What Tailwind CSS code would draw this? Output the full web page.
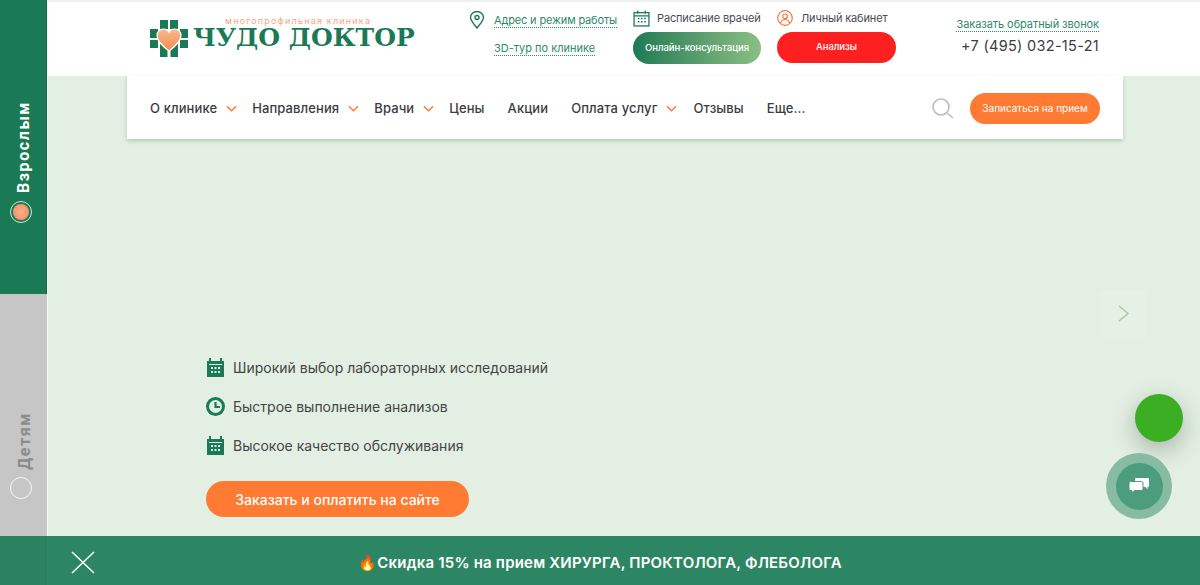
<!DOCTYPE html>
<html lang="ru">
<head>
    <meta charset="UTF-8">
    <title>Чудо Доктор</title>
    <script src="https://cdn.jsdelivr.net/npm/@tailwindcss/browser@4"></script>
</head>
<body class="bg-[#e2efe2] font-['Inter','Roboto',sans-serif] text-[#3c3c3c] overflow-hidden">
<div class="relative w-[1200px] h-[585px] overflow-hidden flex">
    <!-- Side tabs -->
    <aside class="w-[48px] shrink-0 flex flex-col border-r border-white/70">
        <div class="h-[294px] bg-[#1a7a55] border-r border-[#10693f] flex flex-col items-center justify-end pb-[71px]">
            <span class="[writing-mode:vertical-rl] rotate-180 ml-[2px] font-['Roboto',sans-serif] text-[16px] leading-none font-bold tracking-[1.6px] text-white">Взрослым</span>
            <span class="mt-[8px] -ml-[5px] w-[22px] h-[22px] rounded-full border border-white/80 flex items-center justify-center">
                <span class="w-[16px] h-[16px] rounded-full bg-radial from-[#fbae8c] to-[#f8895a]"></span>
            </span>
        </div>
        <div class="flex-1 bg-[#c6c6c6] flex flex-col items-center justify-end pb-[86px]">
            <span class="[writing-mode:vertical-rl] rotate-180 ml-[2px] font-['Roboto',sans-serif] text-[16px] leading-none font-bold tracking-[1.6px] text-[#8b8b8b]">Детям</span>
            <span class="mt-[7px] -ml-[5px] w-[22px] h-[22px] rounded-full border border-white/80"></span>
        </div>
    </aside>

    <main class="flex-1 relative">
        <!-- Header -->
        <header class="h-[76px] bg-white border-t-2 border-[#eef1ef] flex items-start">
            <div class="ml-[102px] mt-[18px] flex items-start w-[264px] shrink-0">
                <svg width="38" height="37" viewBox="0 0 38 37" class="shrink-0">
                    <defs><linearGradient id="heart" x1="0" y1="0" x2="0" y2="1"><stop offset="0" stop-color="#fbb98f"/><stop offset="1" stop-color="#f28a4e"/></linearGradient></defs>
                    <path fill="#1a7a55" d="M10 0h8v9h-8zM20 0h8v9h-8zM0 9h8v9H0zM0 20h8v8H0zM30 9h8v9h-8zM30 20h8v8h-8zM10 24h7.500v13H10zM20.500 24H28v13h-7.500z"/>
                    <path fill="url(#heart)" stroke="#fff" stroke-width="1.200" d="M19 31C12 25.500 7 21 7 15.500 7 11.500 10 9 13.300 9c2.700 0 4.600 1.300 5.700 3.500C20.100 10.300 22 9 24.700 9 28 9 31 11.500 31 15.500 31 21 26 25.500 19 31z"/>
                </svg>
                <div class="ml-[5px] -mt-[4px] flex flex-col items-start">
                    <span class="text-[9px] leading-[9px] tracking-[1.2px] text-[#f7a77c] ml-[32px] mb-[1px] whitespace-nowrap">многопрофильная клиника</span>
                    <span class="font-['DejaVu_Serif',serif] font-bold text-[25px] leading-[24px] text-[#1a7a55] whitespace-nowrap">ЧУДО ДОКТОР</span>
                </div>
            </div>

            <div class="ml-[55px] mt-[8px] w-[215px] text-[11px] shrink-0">
                <div class="flex items-center h-[20px]">
                    <svg class="shrink-0" width="16" height="18" viewBox="0 0 16 18" fill="none" stroke="#1a7a55" stroke-width="1.400"><path d="M8 17C4 12 1.500 9.500 1.500 6.500a6.500 6 0 0 1 13 0C14.500 9.500 12 12 8 17z"/><circle cx="8" cy="6.500" r="2"/></svg>
                    <a class="ml-[9px] text-[#2f8a6c] tracking-[-0.15px] border-b border-dotted border-[#2f8a6c] leading-[14px] whitespace-nowrap">Адрес и режим работы</a>
                </div>
                <div class="mt-[10px] ml-[25px]"><a class="text-[#2f8a6c] border-b border-dotted border-[#2f8a6c] leading-[14px] whitespace-nowrap">3D-тур по клинике</a></div>
            </div>

            <div class="mt-[6px] flex flex-col w-[128px] ml-[-51px] shrink-0">
                <div class="flex items-center h-[20px] text-[11px] tracking-[-0.15px]">
                    <svg class="shrink-0" width="17" height="17" viewBox="0 0 16 16" fill="none" stroke="#1a7a55" stroke-width="1.200"><rect x="1" y="2.500" width="14" height="12.500"/><path d="M1 5.500h14M4.500 0.500v3M11.500 0.500v3"/><path stroke-width="1.500" d="M4.500 8h1.500M7.500 8H9M10.500 8H12M4.500 11h1.500M7.500 11H9M10.500 11H12"/></svg>
                    <span class="ml-[7px] text-[#4a4a55] whitespace-nowrap">Расписание врачей</span>
                </div>
                <a class="mt-[4px] w-[128px] h-[32px] rounded-full bg-linear-to-r from-[#1a7a55] to-[#8abf85] text-white text-[9.500px] font-medium flex items-center justify-center whitespace-nowrap">Онлайн-консультация</a>
            </div>

            <div class="ml-[16px] mt-[6px] flex flex-col w-[119px] shrink-0">
                <div class="flex items-center h-[20px] text-[11px] tracking-[-0.15px]">
                    <svg class="shrink-0" width="16" height="16" viewBox="0 0 16 16" fill="none" stroke="#f47c3c" stroke-width="1.200"><circle cx="8" cy="8" r="7.300"/><circle cx="8" cy="6.300" r="2.300"/><path d="M3.500 13c.8-2.500 2.500-3.500 4.500-3.500s3.700 1 4.500 3.500"/></svg>
                    <span class="ml-[8px] text-[#4a4a55] whitespace-nowrap">Личный кабинет</span>
                </div>
                <a class="mt-[4px] w-[119px] h-[31px] rounded-full bg-[#fc2020] text-white text-[9.500px] font-medium flex items-center justify-center">Анализы</a>
            </div>

            <div class="ml-[59px] mt-[15px] flex flex-col items-end w-[144px] shrink-0">
                <a class="text-[11px] tracking-[-0.07px] leading-[14px] text-[#2f8a6c] border-b border-dotted border-[#2f8a6c] whitespace-nowrap">Заказать обратный звонок</a>
                <span class="mt-[5px] text-[14.500px] leading-[18px] tracking-[0.3px] text-[#3c3c46] whitespace-nowrap">+7 (495) 032-15-21</span>
            </div>
        </header>

        <!-- Nav -->
        <nav class="ml-[79px] w-[996px] h-[63px] bg-white shadow-[0_2px_4px_rgba(0,60,30,0.2)] flex items-center pt-[2px] pl-[23px] pr-[23px] text-[13px] font-medium tracking-[0.1px] text-[#3c3c42]">
            <a>О клинике</a>
            <svg class="ml-[9px]" width="11" height="7" viewBox="0 0 12 7" fill="none" stroke="#ff7a33" stroke-width="1.600"><path d="M1 1l5 5 5-5"/></svg>
            <a class="ml-[15px]">Направления</a>
            <svg class="ml-[9px]" width="11" height="7" viewBox="0 0 12 7" fill="none" stroke="#ff7a33" stroke-width="1.600"><path d="M1 1l5 5 5-5"/></svg>
            <a class="ml-[15px]">Врачи</a>
            <svg class="ml-[9px]" width="11" height="7" viewBox="0 0 12 7" fill="none" stroke="#ff7a33" stroke-width="1.600"><path d="M1 1l5 5 5-5"/></svg>
            <a class="ml-[15px]">Цены</a>
            <a class="ml-[23px]">Акции</a>
            <a class="ml-[23px]">Оплата услуг</a>
            <svg class="ml-[9px]" width="11" height="7" viewBox="0 0 12 7" fill="none" stroke="#ff7a33" stroke-width="1.600"><path d="M1 1l5 5 5-5"/></svg>
            <a class="ml-[16px]">Отзывы</a>
            <a class="ml-[23px]">Еще…</a>
            <svg class="ml-auto" width="22" height="21" viewBox="0 0 22 21" fill="none" stroke="#bdbdbd" stroke-width="1.600"><circle cx="9" cy="9" r="8"/><path d="M15 15l6 5"/></svg>
            <a class="ml-[16px] w-[130px] h-[31px] rounded-full bg-[#ff7a33] text-white text-[10px] tracking-normal font-normal flex items-center justify-center whitespace-nowrap">Записаться на прием</a>
        </nav>

        <!-- Promo list -->
        <ul class="ml-[158px] mt-[219px] flex flex-col gap-[20px] text-[14px] leading-[19px] text-[#454545]">
            <li class="flex items-center gap-[8px]">
                <svg width="19" height="19" viewBox="0 0 19 19"><path fill="#1a7a55" d="M1 3h2V0h2v3h9V0h2v3h2v16H1z"/><path fill="#e2efe2" d="M3 6h13v1H3z"/><path fill="#e2efe2" d="M5 9h2v2H5zM8.500 9h2v2h-2zM12 9h2v2h-2zM5 13h2v2H5zM8.500 13h2v2h-2zM12 13h2v2h-2z"/></svg>
                Широкий выбор лабораторных исследований
            </li>
            <li class="flex items-center gap-[8px]">
                <svg width="19" height="19" viewBox="0 0 19 19"><circle cx="9.500" cy="9.500" r="9.500" fill="#1a7a55"/><circle cx="9.500" cy="9.500" r="6.500" fill="#e2efe2"/><path d="M9.500 5v5h4.500" fill="none" stroke="#1a7a55" stroke-width="2.200"/></svg>
                Быстрое выполнение анализов
            </li>
            <li class="flex items-center gap-[8px]">
                <svg width="19" height="19" viewBox="0 0 19 19"><path fill="#1a7a55" d="M1 3h2V0h2v3h9V0h2v3h2v16H1z"/><path fill="#e2efe2" d="M3 6h13v1H3z"/><path fill="#e2efe2" d="M5 9h2v2H5zM8.500 9h2v2h-2zM12 9h2v2h-2zM5 13h2v2H5zM8.500 13h2v2h-2zM12 13h2v2h-2z"/></svg>
                Высокое качество обслуживания
            </li>
        </ul>
        <a class="ml-[158px] mt-[26px] w-[263px] h-[36px] rounded-full bg-[#ff7a33] text-white text-[14px] font-medium flex items-center justify-center">Заказать и оплатить на сайте</a>
    </main>

    <!-- Slider arrow -->
    <div class="absolute left-[1100px] top-[290px] w-[47px] h-[47px] bg-white/10 flex items-center justify-center">
        <svg width="11" height="17" viewBox="0 0 11 17" fill="none" stroke="#9ccb9f" stroke-width="1.300"><path d="M1 1l9 7.500L1 16"/></svg>
    </div>

    <!-- Floating buttons -->
    <div class="absolute left-[1135px] top-[394px] w-[48px] h-[48px] rounded-full bg-[#3bae24] shadow-[0_8px_24px_rgba(0,0,0,0.25)]"></div>
    <div class="absolute left-[1106px] top-[453px] w-[66px] h-[66px] rounded-full bg-[#87bca3] flex items-center justify-center">
        <div class="w-[47px] h-[47px] rounded-full bg-[#4c9c7e] flex items-center justify-center">
            <svg width="20" height="16" viewBox="0 0 20 16"><path fill="#fff" d="M7 0h12a1 1 0 0 1 1 1v7a1 1 0 0 1-1 1h-.500v2.500L16.500 9H7a1 1 0 0 1-1-1V1a1 1 0 0 1 1-1z"/><path fill="#fff" stroke="#4c9c7e" stroke-width="1" d="M1.500 3.500h11a1.500 1.500 0 0 1 1.500 1.500v6a1.500 1.500 0 0 1-1.500 1.500H5.500L3 15.500v-3H1.500A1.500 1.500 0 0 1 0 11V5a1.500 1.500 0 0 1 1.500-1.500z"/></svg>
        </div>
    </div>

    <!-- Bottom promo bar -->
    <div class="absolute left-0 right-0 bottom-0 h-[49px] bg-[#1a7a55]/90 flex items-center justify-center pt-[6px]">
        <svg class="absolute left-[71px] top-[15px]" width="24" height="23" viewBox="0 0 24 23" fill="none" stroke="#fff" stroke-width="1.500"><path d="M1 1l22 21M23 1L1 22"/></svg>
        <span class="text-[#fff] text-[15px] font-semibold tracking-[0.2px] whitespace-nowrap flex items-center">🔥Скидка 15% на прием ХИРУРГА, ПРОКТОЛОГА, ФЛЕБОЛОГА</span>
    </div>
</div>
</body>
</html>
